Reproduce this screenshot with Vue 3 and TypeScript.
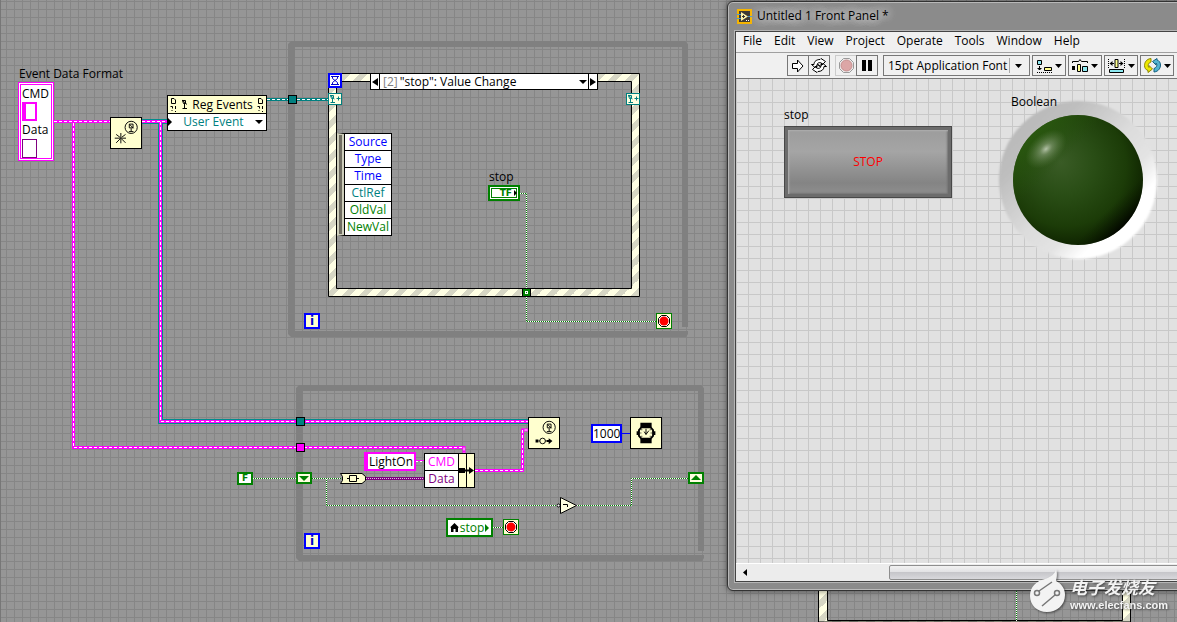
<script setup lang="ts">
import { ref } from 'vue'

const menus: string[] = ['File', 'Edit', 'View', 'Project', 'Operate', 'Tools', 'Window', 'Help']

interface Field { name: string; kind: string }
const fields: Field[] = [
  { name: 'Source', kind: 'blue' },
  { name: 'Type', kind: 'blue' },
  { name: 'Time', kind: 'blue' },
  { name: 'CtlRef', kind: 'teal' },
  { name: 'OldVal', kind: 'green' },
  { name: 'NewVal', kind: 'green' },
]

const cmd = ref('')
const dataValue = ref('')
const light = ref('LightOn')
const wait = ref('1000')

const clusterWires: string[] = [
  'M54 121.5H110',
  'M73.5 123V447.5H464V453',
  'M475 470.5H522.5V430H528',
]
const refWires: string[] = ['M142 121.5H167', 'M160.5 122V421.5H528']
const boolWires: string[] = [
  'M520 193.5H526.5V321.5H656',
  'M253 478.5H341',
  'M326.5 479V505.5H557',
  'M577 505.5H631.5V478.5H688',
  'M493 527.5H503',
  'M1016.5 590V621',
]
</script>

<template>
  <main class="diagram">
    <svg class="wires" aria-hidden="true">
      <defs>
        <linearGradient id="hatch" gradientUnits="userSpaceOnUse" x1="0" y1="0" x2="8.5" y2="8.5" spreadMethod="repeat">
          <stop offset="0" stop-color="#ffffe4" />
          <stop offset="0.5" stop-color="#ffffe4" />
          <stop offset="0.5" stop-color="#d6d6c4" />
          <stop offset="1" stop-color="#d6d6c4" />
        </linearGradient>
      </defs>
      <rect x="0" y="0" width="1" height="100%" fill="#777" />
      <g fill="#808080">
        <path d="M291 41H685L688 44V327H682V47H295V331H688V334L686 337H291L288 334V44Z" />
        <path d="M299 385H701L704 388V551H698V391H303V555H704V558L702 561H299L296 558V388Z" />
      </g>
      <path d="M328.500 73.500H639.500V296.500H328.500ZM336.500 81.500V288.500H631.500V81.500Z" fill="url(#hatch)" fill-rule="evenodd" stroke="#000" />
      <path d="M818.500 585V622H1130.500V585H1122.500V620.500H827.500V585Z" fill="url(#hatch)" stroke="#000" />
      <g fill="none">
        <path v-for="d in refWires" :key="d" :d="d" stroke="#008c8c" stroke-width="5" />
        <g v-for="d in [...refWires, ...clusterWires]" :key="'m' + d">
          <path :d="d" stroke="#f0f" stroke-width="3" />
          <path :d="d" stroke="#fff" stroke-dasharray="3 2" />
        </g>
        <path d="M267 99.500H330" stroke="#008080" stroke-width="3" />
        <path d="M267 99.500H330" stroke="#fff" stroke-dasharray="3 2" />
        <path d="M366 478.500H424" stroke="#800080" stroke-width="3" />
        <path d="M366 478.500H424" stroke="#e8b8e8" stroke-dasharray="1 1" />
        <path d="M416 460.500H424" stroke="#f0f" />
        <path d="M416 461.500H424" stroke="#fff" stroke-dasharray="2 2" />
        <path d="M621 433.500H630" stroke="#00f" />
        <g v-for="d in boolWires" :key="d">
          <path :d="d" stroke="#008000" />
          <path :d="d" stroke="#fff" stroke-dasharray="1 1" />
        </g>
      </g>
      <g stroke="#000">
        <rect x="288.500" y="95.500" width="8" height="8" fill="#008080" />
        <rect x="296.500" y="417.500" width="8" height="8" fill="#008080" />
        <rect x="296.500" y="443.500" width="8" height="8" fill="#f0f" />
        <rect x="522.500" y="288.500" width="8" height="8" fill="#008000" />
        <rect x="525.500" y="291.500" width="2" height="2" fill="#008000" stroke="#fff" />
      </g>
    </svg>

    <section class="node cluster">
      <label class="caption" for="cmd">Event Data Format</label>
      <label for="cmd">CMD</label>
      <input id="cmd" v-model="cmd" class="string-box" />
      <label for="data">Data</label>
      <input id="data" v-model="dataValue" class="variant-box" />
    </section>

    <svg class="node create-event prim" viewBox="0 0 32 32" role="img" aria-label="Create User Event">
      <g fill="none" stroke="#000">
        <circle cx="21.500" cy="10" r="6.500" />
        <path d="M19.500 6.500H23.500V10.500H19.500ZM20 7L24 11M21.500 11V14.500M19 14.500H24" />
        <path d="M10.500 16V27M4 21.500H16M5.500 17.500L9.500 20.500M15.500 17.500L11.500 20.500M5.500 26.500L9.500 22.500M15.500 26.500L11.500 22.500" />
      </g>
    </svg>

    <section class="node reg">
      <header>
        <svg width="7" height="15" viewBox="0 0 7 15" aria-hidden="true"><path d="M1.500 1.500H4L5.500 3V6.500H1.500ZM.5 9.500H2.500V11.500M5.500 9V12M1.500 13.500H2.500M5 14.500H6" fill="none" stroke="#000" /></svg>
        <svg width="7" height="11" viewBox="0 0 7 11" aria-hidden="true"><path d="M1.500 1.500H4.500V4.500H2.500ZM1 1L6 5.500M3.500 5V9.500M1.500 9.500H6" fill="none" stroke="#000" /></svg>
        <span>Reg Events</span>
        <svg width="7" height="15" viewBox="0 0 7 15" aria-hidden="true"><path d="M1.500 1.500H4L5.500 3V6.500H1.500ZM.5 9.500H2.500V11.500M5.500 9V12M1.500 13.500H2.500M5 14.500H6" fill="none" stroke="#000" /></svg>
      </header>
      <div class="reg-row">
        <svg width="4" height="8" viewBox="0 0 4 8" aria-hidden="true"><path d="M0 0L4 4L0 8Z" /></svg>
        <select aria-label="Event source"><option>User Event</option></select>
        <svg width="8" height="4" viewBox="0 0 8 4" aria-hidden="true"><path d="M0 0H8L4 4Z" /></svg>
      </div>
    </section>

    <section class="node case-selector">
      <button type="button" aria-label="Previous case"><svg width="6" height="8" viewBox="0 0 6 8"><path d="M6 0V8L0 4Z" /></svg></button>
      <div class="case-name">
        <label for="case">[2]</label>
        <select id="case"><option>"stop": Value Change</option></select>
        <svg width="8" height="4" viewBox="0 0 8 4" aria-hidden="true"><path d="M0 0H8L4 4Z" /></svg>
      </div>
      <button type="button" aria-label="Next case"><svg width="6" height="8" viewBox="0 0 6 8"><path d="M0 0V8L6 4Z" /></svg></button>
    </section>

    <svg class="node timeout" viewBox="0 0 14 15" aria-hidden="true">
      <rect x="1" y="1" width="12" height="13" fill="#fff" stroke="#00f" stroke-width="2" />
      <path d="M3 3.500H11M3 11.500H11M4.500 4V5.500L9.500 9.500V11M9.500 4V5.500L4.500 9.500V11" fill="none" stroke="#00c" />
    </svg>
    <svg v-for="side in ['dyn-left', 'dyn-right']" :key="side" class="node dyn" :class="side" viewBox="0 0 14 12" aria-hidden="true">
      <rect x=".5" y=".5" width="13" height="11" fill="#ffffe1" stroke="#008080" />
      <path d="M2.500 2.500H5.500V5.500H3.500ZM2 2L6.500 6M4.500 6V9.500M2.500 9.500H7M8.500 5.500H12.500M10.500 3.500V7.500" fill="none" stroke="#008080" />
    </svg>

    <ul class="node event-data">
      <li v-for="f in fields" :key="f.name" :class="f.kind">{{ f.name }}</li>
    </ul>

    <span class="node stop-label">stop</span>
    <div class="node tf"><span>TF</span><svg width="4" height="8" viewBox="0 0 4 8" aria-hidden="true"><path d="M0 1L3 4L0 7Z" /></svg></div>

    <div class="node iter iter-a">i</div>
    <div class="node iter iter-b">i</div>
    <svg v-for="at in ['cond-a', 'cond-b']" :key="at" class="node cond" :class="at" viewBox="0 0 16 16" role="img" aria-label="Stop if true">
      <rect x=".5" y=".5" width="15" height="15" fill="#ffffd0" stroke="#008000" />
      <path d="M5.500 2.500H10.500L13.500 5.500V10.500L10.500 13.500H5.500L2.500 10.500V5.500Z" fill="#fff" stroke="#000" />
      <circle cx="8" cy="8" r="4.500" fill="#f00" />
    </svg>

    <div class="node false-const">F</div>
    <svg class="node shift shift-left" viewBox="0 0 16 12" aria-hidden="true"><rect x="1" y="1" width="14" height="10" fill="#ffffe1" stroke="#008000" stroke-width="2" /><path d="M3 4H13L8 9Z" fill="#008000" /></svg>
    <svg class="node shift shift-right" viewBox="0 0 16 12" aria-hidden="true"><rect x="1" y="1" width="14" height="10" fill="#ffffe1" stroke="#008000" stroke-width="2" /><path d="M3 8H13L8 3Z" fill="#008000" /></svg>

    <svg class="node to-variant" viewBox="0 0 26 11" role="img" aria-label="To Variant">
      <path d="M.5 .5H22L25.500 3.500V7.500L22 10.500H.5L2.500 7.500V3.500Z" fill="#ffffcf" stroke="#000" />
      <path d="M9.500 2.500H16.500V8.500H9.500ZM7 5.500H9.500M16.500 5.500H19" fill="none" stroke="#000" />
    </svg>

    <input v-model="light" class="node light-const" aria-label="Command string" />
    <section class="node bundle">
      <div class="names"><span class="pink">CMD</span><span class="purple">Data</span></div>
      <svg width="17" height="35" viewBox="0 0 17 35" aria-hidden="true">
        <rect x=".5" y=".5" width="16" height="34" fill="#ffffcf" stroke="#000" />
        <path d="M8.500 0V35" stroke="#000" />
        <path d="M1 15H7V20H1ZM7 16.500H11V14L16 17.500L11 21V18.500H7Z" />
      </svg>
    </section>

    <svg class="node gen-event prim" viewBox="0 0 32 32" role="img" aria-label="Generate User Event">
      <g fill="none" stroke="#000">
        <circle cx="21.500" cy="10" r="6.500" />
        <path d="M19.500 6.500H23.500V10.500H19.500ZM20 7L24 11M21.500 11V14.500M19 14.500H24" />
        <circle cx="14.500" cy="24.500" r="3" />
        <path d="M10 24.500H11.500M17.500 24.500H20" />
      </g>
      <path d="M7 23H10V26H7ZM19 23.500H21V21.500L25 24.500L21 28V25.500H19Z" />
    </svg>

    <input v-model="wait" class="node wait-const" aria-label="Milliseconds to wait" />
    <svg class="node wait prim" viewBox="0 0 32 32" role="img" aria-label="Wait (ms)">
      <path d="M10 5H22V10H10ZM10 22H22V27H10Z" />
      <path d="M11 10H21L23.500 13V19L21 22H11L8.500 19V13Z" fill="#ffffcf" stroke="#000" stroke-width="2" />
      <path d="M11 12.500H12M11 19.500H12M20 12.500H21M20 19.500H21M10 16H11M21 16H22M16 11.500V17.500M16 17.500L19 13.500M14 14.500L16 17.500" fill="none" stroke="#000" />
      <path d="M24 14H26V18H24ZM6 14H8V18H6Z" />
    </svg>

    <svg class="node not-gate" viewBox="0 0 22 17" role="img" aria-label="Not">
      <path d="M4.500 .5L20.500 8.500L4.500 16.500Z" fill="#ffffe1" stroke="#000" />
      <circle cx="2.500" cy="8.500" r="1.500" fill="#fff" stroke="#000" />
      <path d="M7 7.500H11.500V10" fill="none" stroke="#000" />
    </svg>

    <div class="node stop-local">
      <svg width="9" height="9" viewBox="0 0 9 9" aria-hidden="true"><path d="M4.500 0L9 4.500H8V9H5.500V6H3.500V9H1V4.500H0Z" /></svg>
      <span>stop</span>
      <svg width="4" height="8" viewBox="0 0 4 8" aria-hidden="true"><path d="M0 0L4 4L0 8Z" fill="#008000" /></svg>
    </div>

    <section class="window">
      <header class="title">
        <svg width="15" height="15" viewBox="0 0 15 15" aria-hidden="true">
          <rect x="1" y="1" width="13" height="13" fill="#3e3a34" stroke="#f5b400" stroke-width="2" />
          <path d="M0 5.500H4M0 9.500H4M11 7.500H15" stroke="#4a9ad0" />
          <path d="M4 3L11 7.500L4 12Z" fill="#fff3a8" />
          <path d="M5 7.500H8M6.500 6V9" stroke="#333" />
          <path d="M9 11.500H12" stroke="#fff" stroke-dasharray="1 1" />
        </svg>
        <h1>Untitled 1 Front Panel *</h1>
      </header>
      <div class="frame">
        <nav class="menu"><button v-for="m in menus" :key="m" type="button">{{ m }}</button></nav>
        <div class="toolbar">
          <div class="group">
            <button type="button" aria-label="Run"><svg width="12" height="14" viewBox="0 0 12 14"><path d="M.5 4.500H5.500V1L11 7L5.500 13V9.500H.5Z" fill="#fff" stroke="#000" /></svg></button>
            <button type="button" aria-label="Run continuously"><svg width="16" height="15" viewBox="0 0 16 15"><path d="M3 6.500C3 3 6 1.500 9 1.500L10 .5L14.500 3.500L10.500 7.500V5C8 4 6.500 5 6 6.500L8 7L4 9.500L.5 6.500ZM13 8.500C13 12 10 13.500 7 13.500L6 14.500L1.500 11.500L5.500 7.500V10C8 11 9.500 10 10 8.500L8 8L12 5.500L15.500 8.500Z" fill="#fff" stroke="#000" /></svg></button>
          </div>
          <div class="group">
            <button type="button" class="abort" aria-label="Abort" disabled><svg width="15" height="15" viewBox="0 0 15 15"><path d="M4.500 .5H10.500L14.500 4.500V10.500L10.500 14.500H4.500L.5 10.500V4.500Z" fill="#eee" stroke="#999" /><circle cx="7.500" cy="7.500" r="5.500" fill="#dca6a6" stroke="#c58e8e" /></svg></button>
            <button type="button" aria-label="Pause"><svg width="10" height="11" viewBox="0 0 10 11"><path d="M0 0H4V11H0ZM6 0H10V11H6Z" /></svg></button>
          </div>
          <div class="font-pick">
            <select aria-label="Text settings"><option>15pt Application Font</option></select>
            <svg width="7" height="4" viewBox="0 0 7 4" aria-hidden="true"><path d="M0 0H7L3.500 4Z" /></svg>
          </div>
          <button type="button" class="drop" aria-label="Align objects">
            <svg width="16" height="14" viewBox="0 0 16 14"><path d="M1.500 1.500H5.500V5.500H1.500Z" fill="#8ce8f0" stroke="#000" /><path d="M8.500 8.500H15.500V11.500H8.500Z" fill="#ffff90" stroke="#000" /><path d="M3.500 7V11M1.500 9.500H5.500M2.500 10.500H4.500" fill="none" stroke="#000" /><path d="M1 13.500H16" stroke="#000" stroke-dasharray="1 1" /></svg>
            <svg width="7" height="4" viewBox="0 0 7 4"><path d="M0 0H7L3.500 4Z" /></svg>
          </button>
          <button type="button" class="drop" aria-label="Distribute objects">
            <svg width="16" height="14" viewBox="0 0 16 14"><path d="M.5 4V2.500H6.500L8 .5L9.500 2.500H15.500V4" fill="none" stroke="#000" /><path d="M0 7H3V11H0Z" /><path d="M5.500 5.500H8.500V12.500H5.500Z" fill="#ffff90" stroke="#000" /><path d="M10.500 7.500H15.500V12.500H10.500Z" fill="#8ce8f0" stroke="#000" /></svg>
            <svg width="7" height="4" viewBox="0 0 7 4"><path d="M0 0H7L3.500 4Z" /></svg>
          </button>
          <button type="button" class="drop" aria-label="Resize objects">
            <svg width="17" height="14" viewBox="0 0 17 14"><path d="M.5 0V9M16.500 0V9" stroke="#000" stroke-dasharray="1 1" /><path d="M2 4.500H6M11 4.500H15" stroke="#000" /><path d="M1.500 4.500L4.500 2V7ZM15.500 4.500L12.500 2V7Z" /><path d="M7 .5H10V8.500H7Z" fill="#ffff90" stroke="#000" /><path d="M1.500 10.500H15.500V13.500H1.500Z" fill="#8ce8f0" stroke="#000" /></svg>
            <svg width="7" height="4" viewBox="0 0 7 4"><path d="M0 0H7L3.500 4Z" /></svg>
          </button>
          <button type="button" class="drop" aria-label="Reorder">
            <svg width="17" height="15" viewBox="0 0 17 15"><path d="M7 .5C2 1 .5 5 .5 7.500C.5 10 2 12 4 12.500V14.500L8.500 11L5 7.500V9.500C3.500 8 4 5 7 4Z" fill="#ede800" stroke="#8a8500" /><path d="M10 14C15 13.500 16.500 9.500 16.500 7C16.500 4.500 15 2.500 13 2V.5L8.500 3.500L12 7V5C13.500 6.500 13 9.500 10 10.500Z" fill="#52b4d0" stroke="#155f80" /></svg>
            <svg width="7" height="4" viewBox="0 0 7 4"><path d="M0 0H7L3.500 4Z" /></svg>
          </button>
        </div>
        <div class="panel">
          <div class="node stop-control"><label for="stop-btn">stop</label><button id="stop-btn" type="button">STOP</button></div>
          <svg class="node led" viewBox="0 0 164 164" role="img" aria-label="Boolean, off">
            <defs>
              <linearGradient id="bezel" x1="0.15" y1="0.15" x2="0.85" y2="0.85">
                <stop offset="0" stop-color="#bababa" /><stop offset=".15" stop-color="#bebebe" /><stop offset=".5" stop-color="#dcdcdc" /><stop offset=".7" stop-color="#e3e3e3" /><stop offset=".86" stop-color="#fff" /><stop offset="1" stop-color="#fff" />
              </linearGradient>
              <radialGradient id="bulb" cx=".42" cy=".4" r=".62" fx=".36" fy=".36">
                <stop offset="0" stop-color="#3a5c26" /><stop offset=".4" stop-color="#294d15" /><stop offset=".75" stop-color="#1c3c08" /><stop offset="1" stop-color="#0e2200" />
              </radialGradient>
              <linearGradient id="rim" x1="0.1" y1="0.1" x2="0.87" y2="0.87">
                <stop offset="0" stop-color="#2c5e10" /><stop offset=".35" stop-color="#24500a" stop-opacity="0" /><stop offset=".82" stop-color="#0c1e00" stop-opacity="0" /><stop offset="1" stop-color="#000" />
              </linearGradient>
              <radialGradient id="glint"><stop offset="0" stop-color="#c3d0b8" stop-opacity=".9" /><stop offset=".3" stop-color="#a2b394" stop-opacity=".5" /><stop offset="1" stop-color="#6c8a57" stop-opacity="0" /></radialGradient>
              <filter id="soft"><feGaussianBlur stdDeviation="1" /></filter>
            </defs>
            <circle cx="82" cy="82" r="79" fill="url(#bezel)" filter="url(#soft)" />
            <circle cx="82" cy="82" r="65" fill="url(#bulb)" />
            <circle cx="82" cy="82" r="65" fill="url(#rim)" />
            <ellipse cx="50" cy="51" rx="24" ry="15" fill="url(#glint)" transform="rotate(-42 50 51)" />
          </svg>
          <span class="node led-label">Boolean</span>
        </div>
        <div class="scroll">
          <button type="button" aria-label="Scroll left"><svg width="4" height="7" viewBox="0 0 4 7"><path d="M4 0V7L0 3.500Z" /></svg></button>
          <div class="thumb"></div>
        </div>
      </div>
    </section>

    <aside class="node brand">
      <svg width="38" height="46" viewBox="0 0 38 46" aria-hidden="true">
        <path d="M28 1C30 7 28 12 28 13C34 16 37 21 37 27C37 37 29 44 19 44C9 44 2 37 2 28C2 19 8 13 17 11C23 9 27 6 28 1Z" fill="#f3f3f3" />
        <g fill="none" stroke="#777" stroke-width="1.500"><circle cx="9" cy="25" r="2.500" /><circle cx="29" cy="25" r="2.500" /><path d="M11 23L24 14M27 27L14 38" /></g>
      </svg>
      <div><strong>电子发烧友</strong><a href="#">www.elecfans.com</a></div>
    </aside>
  </main>
</template>

<style>
html, body { margin: 0; background: #969696; }
</style>

<style scoped>
* { box-sizing: border-box; }
.diagram {
  position: relative;
  min-height: 100vh;
  overflow: hidden;
  background-color: #969696;
  background-image: linear-gradient(to right, #868686 1px, transparent 1px), linear-gradient(#868686 1px, transparent 1px);
  background-size: 8px 8px;
  background-position: 6px 1px;
  font: 12px/16px "Segoe UI", "Open Sans", "Noto Sans", sans-serif;
  color: #000;
}
svg { display: block; flex: none; }
button, input, select { font: inherit; color: inherit; margin: 0; padding: 0; border: 0; border-radius: 0; background: none; outline: 0; }
select { appearance: none; flex: 1; min-width: 0; }
.node { position: absolute; }
.wires { position: absolute; width: 100%; height: 100%; }
.prim { width: 32px; height: 32px; background: #ffffcf; border: 1px solid #000; }

.cluster { left: 18px; top: 82px; width: 36px; height: 79px; padding: 1px; display: flex; flex-direction: column; align-items: flex-start; background: #fff; border: 3px double #f0f; }
.cluster .caption { position: absolute; left: -2px; bottom: 76px; white-space: nowrap; }
.string-box { width: 15px; height: 19px; margin-bottom: 1px; background: #fff; border: 2px solid #f0f; border-left-width: 4px; }
.variant-box { width: 15px; height: 19px; margin-top: 1px; border: 1px solid #800080; }
.create-event { left: 110px; top: 117px; }

.reg { left: 167px; top: 95px; width: 100px; border: 1px solid #000; background: #fff; }
.reg header { display: flex; align-items: center; justify-content: space-between; height: 18px; padding: 0 2px; background: #ffffcf; border-bottom: 1px solid #000; }
.reg-row { display: flex; align-items: center; height: 16px; padding-right: 3px; color: #008080; }
.reg-row select { text-align: center; text-align-last: center; height: 16px; }

.case-selector { left: 370px; top: 73px; width: 228px; height: 17px; display: flex; background: #fff; border: 1px solid #000; }
.case-selector button { width: 8px; display: grid; place-items: center; }
.case-name { flex: 1; min-width: 0; display: flex; align-items: center; gap: 2px; padding: 0 1px 0 3px; border: solid #000; border-width: 0 1px; }
.case-name label { color: #808080; }

.timeout { left: 328px; top: 73px; width: 14px; height: 15px; }
.dyn { top: 93px; width: 14px; height: 12px; }
.dyn-left { left: 328px; }
.dyn-right { left: 626px; }

.event-data { left: 337px; top: 133px; width: 55px; margin: 0; padding: 0; list-style: none; border: 1px solid #000; border-left: 7px solid #cdcdba; background: #fff; text-align: center; }
.event-data::before { content: ""; position: absolute; left: -5px; top: 1px; bottom: 1px; width: 3px; background: #706e62; }
.event-data li { height: 17px; border-left: 1px solid #000; border-bottom: 1px solid #000; }
.event-data li:last-child { border-bottom: 0; height: 16px; }
.blue { color: #00f; }
.teal { color: #008080; }
.green { color: #008000; }
.pink { color: #f0f; }
.purple { color: #800080; }

.stop-label { left: 489px; top: 169px; }
.tf { left: 488px; top: 185px; width: 32px; height: 16px; display: flex; align-items: center; justify-content: flex-end; gap: 2px; background: #fff; border: 2px solid #008000; box-shadow: inset 0 0 0 1px #fff, inset 0 0 0 2px #008000; color: #008000; font: bold 9px/12px "DejaVu Sans", sans-serif; }
.iter { left: 304px; width: 16px; height: 16px; background: #ffffcf; border: 2px solid #00f; color: #00c; text-align: center; font: bold 12px/12px "DejaVu Sans", sans-serif; }
.iter-a { top: 313px; }
.iter-b { top: 533px; }
.cond { width: 16px; height: 16px; }
.cond-a { left: 656px; top: 313px; }
.cond-b { left: 503px; top: 519px; }
.false-const { left: 237px; top: 472px; width: 16px; height: 13px; border: 2px solid #008000; background: #fff; color: #008000; text-align: center; font: bold 9px/9px "DejaVu Sans", sans-serif; }
.shift { top: 472px; width: 16px; height: 12px; }
.shift-left { left: 296px; }
.shift-right { left: 688px; }
.to-variant { left: 340px; top: 473px; width: 26px; height: 11px; }
.light-const { left: 364px; top: 452px; width: 52px; height: 19px; text-align: center; background: #fff; border: 2px solid #f0f; border-left-width: 4px; }
.bundle { left: 424px; top: 453px; display: flex; }
.names { width: 34px; height: 35px; display: flex; flex-direction: column; text-align: center; background: #fff; border: 1px solid #000; border-right: 0; }
.names span { height: 17px; }
.names .pink { border-bottom: 1px solid #000; }
.gen-event { left: 528px; top: 417px; }
.wait-const { left: 591px; top: 424px; width: 31px; height: 19px; text-align: center; background: #fff; border: 2px solid #00f; }
.wait { left: 630px; top: 417px; }
.not-gate { left: 556px; top: 497px; width: 22px; height: 17px; }
.stop-local { left: 446px; top: 518px; width: 47px; height: 19px; display: flex; align-items: center; justify-content: center; gap: 1px; background: #fff; border: 2px solid #008000; color: #008000; }

.window { position: absolute; left: 727px; right: -16px; top: 1px; bottom: 31px; display: flex; flex-direction: column; padding: 0 7px 8px; background: #8b8b8b; border: 1px solid #333; border-radius: 6px; box-shadow: inset 0 0 0 1px #b8b8b8, 0 0 6px rgba(0, 0, 0, 0.5); }
.title { display: flex; align-items: center; gap: 5px; height: 29px; padding: 0 0 1px 2px; }
.title h1 { margin: 0; font-size: 12px; line-height: 16px; font-weight: 400; text-shadow: 0 0 8px #ddd, 0 0 8px #ddd, 0 0 12px #ccc; }
.frame { flex: 1; min-height: 0; display: flex; flex-direction: column; border: 1px solid #444; outline: 1px solid #b5b5b5; background: #f0f0f0; }
.menu { display: flex; gap: 12px; height: 21px; padding: 0 0 2px 7px; border-bottom: 1px solid #a0a0a0; }
.toolbar { display: flex; align-items: center; gap: 2px; height: 26px; padding-left: 51px; border-bottom: 1px solid #777; }
.toolbar button, .font-pick { height: 21px; display: flex; align-items: center; justify-content: center; border: 1px solid #777; flex: none; }
.group { display: flex; margin-right: 3px; }
.group button { width: 22px; }
.group button + button { margin-left: -1px; }
.toolbar .abort { border-color: #ccc; }
.font-pick { width: 147px; padding: 0 7px 0 4px; }
.font-pick select { height: 15px; margin-right: 5px; border-right: 1px solid #aaa; }
.toolbar .drop { width: 34px; gap: 3px; }
.panel { position: relative; flex: 1; min-height: 0; background-color: #e1e1e1; background-image: linear-gradient(to right, #c8c8c8 1px, transparent 1px), linear-gradient(#c8c8c8 1px, transparent 1px); background-size: 12px 12px; background-position: 0 11px; }
.stop-control { left: 48px; top: 28px; }
.stop-control label { display: block; margin-bottom: 3px; }
.stop-control button { display: block; width: 168px; height: 72px; color: #f00; background: linear-gradient(#9b9b9b, #a5a5a5 35%, #848484 80%, #919191); border: 1px solid #484848; box-shadow: inset 0 0 0 3px #6c6c6c, inset 5px 5px 2px -1px #b0b0b0, inset -5px -5px 2px -1px #747474; }
.led { left: 260px; top: 19px; width: 164px; height: 164px; }
.led-label { left: 275px; top: 15px; }
.scroll { display: flex; height: 18px; border-top: 1px solid #fff; background: #ececec; }
.scroll button { width: 17px; display: grid; place-items: center; }
.thumb { flex: 1; margin: 1px 0 1px 136px; border: 1px solid #8e8e8e; border-radius: 2px; background: linear-gradient(#f2f2f2, #e2e2e4 45%, #c6c6ca 50%, #d8d8dc); }

.brand { left: 1028px; top: 568px; display: flex; gap: 4px; filter: drop-shadow(1px 1px 1px rgba(0, 0, 0, 0.5)); color: #f3f3f3; }
.brand div { display: flex; flex-direction: column; padding-top: 9px; }
.brand strong { font: italic bold 17px/20px "Noto Sans CJK SC", sans-serif; }
.brand a { color: inherit; text-decoration: none; font: bold 11px/16px "Liberation Sans", sans-serif; }
</style>
